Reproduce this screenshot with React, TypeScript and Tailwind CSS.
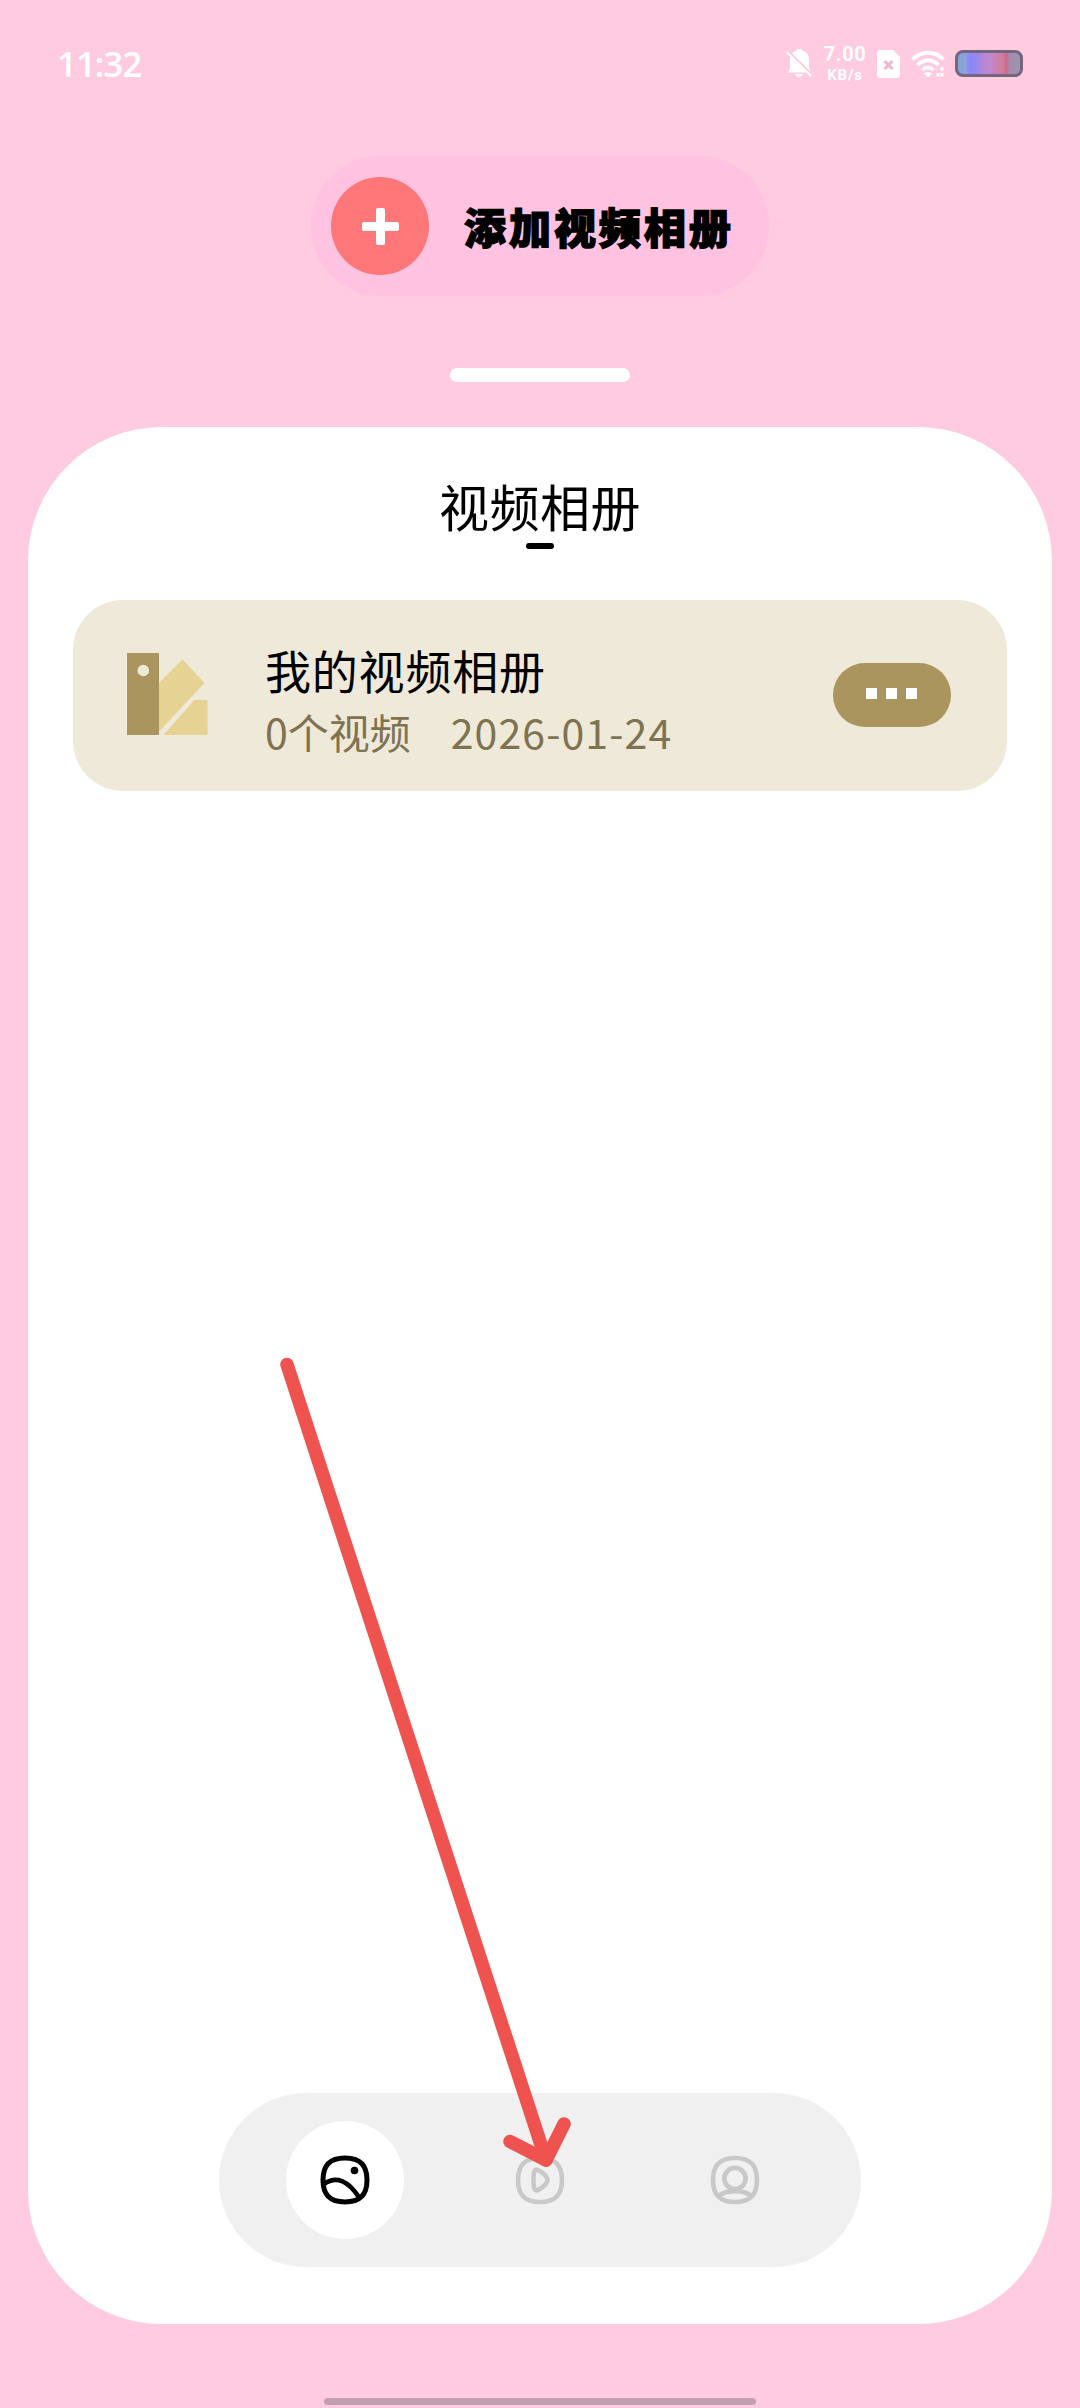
import React, { useState } from "react";

const albums = [{ id: 1, name: "我的视频相册", count: 0, date: "2026-01-24" }];

const SQUIRCLE =
  "M25 3C40 3 47 10 47 25C47 40 40 47 25 47C10 47 3 40 3 25C3 10 10 3 25 3Z";

const GalleryIcon = () => (
  <svg width="50" height="50" viewBox="0 0 50 50" fill="none">
    <path d={SQUIRCLE} stroke="currentColor" strokeWidth="5" />
    <path
      d="M4 29C16 20.5 28 25 39.5 43"
      stroke="currentColor"
      strokeWidth="4.6"
    />
    <circle cx="34.5" cy="15.5" r="3.8" fill="currentColor" />
  </svg>
);

const PlayIcon = () => (
  <svg width="50" height="50" viewBox="0 0 50 50" fill="none">
    <path d={SQUIRCLE} stroke="currentColor" strokeWidth="4.6" />
    <path
      d="M18.5 25C18.5 17 19.5 13.5 23 15C26 16.5 32.5 21 32.5 25C32.5 29 26 33.5 23 35C19.5 36.5 18.5 33 18.5 25Z"
      stroke="currentColor"
      strokeWidth="4.6"
    />
  </svg>
);

const ProfileIcon = () => (
  <svg width="50" height="50" viewBox="0 0 50 50" fill="none">
    <path d={SQUIRCLE} stroke="currentColor" strokeWidth="4.6" />
    <circle cx="25" cy="23.5" r="10.6" stroke="currentColor" strokeWidth="4.6" />
    <path
      d="M8.5 41C17 34.5 33 34.5 41.5 41"
      stroke="currentColor"
      strokeWidth="4.6"
    />
  </svg>
);

const tabs = [
  { id: "albums", label: "相册", icon: GalleryIcon },
  { id: "play", label: "播放", icon: PlayIcon },
  { id: "profile", label: "我的", icon: ProfileIcon },
];

const StatusBar = () => (
  <header className="flex h-[84px] items-center pl-[57px] pr-[57px] pt-[43px] text-white">
    <span className="font-['Open_Sans',sans-serif] text-[35px] font-semibold leading-10 tracking-[-1.1px]">
      11:32
    </span>
    <div className="ml-auto flex h-10 items-center">
      <svg width="26" height="30" viewBox="0 0 26 30">
        <path
          d="M11 1.5a2.5 2.5 0 0 1 5 0c4.500 1 7 4.500 7 9v8l2 5H2l2-5v-8c0-4.500 2.500-8 7-9ZM9 25h8c-1 4-7 4-8 0Z"
          fill="#fff"
        />
        <path d="M2 2L26 25.5" stroke="#ffcbe1" strokeWidth="2" />
        <path d="M0.5 3L25 27" stroke="#fff" strokeWidth="1.8" />
      </svg>
      <div className="ml-[11px] flex w-[44px] flex-col items-center font-['Roboto',sans-serif] font-bold">
        <span className="text-[20px] leading-[23px] tracking-[0.6px]">7.00</span>
        <span className="text-[15px] leading-[18px] tracking-[0.8px]">KB/s</span>
      </div>
      <svg className="ml-[10px]" width="24" height="28" viewBox="0 0 24 28">
        <path
          d="M3 0h13l7 7v18a3 3 0 0 1-3 3H3a3 3 0 0 1-3-3V3a3 3 0 0 1 3-3Z"
          fill="#fff"
        />
        <path d="M7.5 11l8 8M15.5 11l-8 8" stroke="#efb6d0" strokeWidth="3" />
      </svg>
      <svg className="ml-[10px]" width="34" height="28" viewBox="0 0 34 28" fill="none">
        <path d="M1.5 9.5C10 0.5 24 0.5 32.5 9.5" stroke="#fff" strokeWidth="4" />
        <path d="M6.5 15C12.5 8.5 21.5 8.5 27.5 15" stroke="#fff" strokeWidth="4" />
        <path d="M11.5 20C15 16.5 19 16.5 22.5 20" stroke="#fff" strokeWidth="3.5" />
        <path d="M13 23.5Q17 20.5 21 23.5L17 27.5Z" fill="#fff" />
        <path d="M31 17v3.5M31 23v3.5M27 23v3.5" stroke="#fff" strokeWidth="3" />
      </svg>
      <div className="ml-[10px] h-[27px] w-[68px] rounded-[8px] border-[3px] border-[#75667f] bg-[linear-gradient(90deg,#84a2cf_0%,#8ba1dc_12%,#8988fa_20%,#9a88ec_32%,#b985d4_42%,#bf88cf_52%,#d07fab_66%,#d27698_74%,#c9678a_78%,#a38bab_83%,#9a95b3_100%)]" />
    </div>
  </header>
);

const SwatchIcon = () => (
  <svg className="mb-[4px]" width="82" height="82" viewBox="0 0 82 82">
    <path
      d="M0 0H32V82H0ZM16.3 11.7a5.8 5.8 0 1 0 0.01 11.6a5.8 5.8 0 1 0 0-11.6Z"
      fill="#a9955d"
      fillRule="evenodd"
    />
    <path d="M32 30L55.5 6.5L77.5 30L32 78.500Z" fill="#e6d293" />
    <path d="M67.500 47H80.500V82H36.500Z" fill="#e6d293" />
  </svg>
);

// Hand-drawn style pointer over the play tab
const GuideArrow = () => (
  <svg
    className="pointer-events-none absolute left-[270px] top-[1350px]"
    width="320"
    height="830"
    viewBox="270 1350 320 830"
    fill="none"
    stroke="#ef534f"
    strokeWidth="13.5"
    strokeLinecap="round"
    strokeLinejoin="round"
  >
    <path d="M287 1364.5L546 2160" />
    <path d="M510 2141.5L546 2160L564 2124" />
  </svg>
);

export default function App() {
  const [activeTab, setActiveTab] = useState("albums");

  return (
    <div className="relative flex h-[2408px] w-[1080px] flex-col overflow-hidden bg-[#ffcbe1] font-['Noto_Sans_CJK_SC',sans-serif]">
      <StatusBar />

      <button className="mx-auto mt-[72px] flex h-[140px] w-[458px] items-center rounded-full bg-[#ffc2e0] pl-5">
        <span className="flex size-[98px] items-center justify-center rounded-full bg-[#fd7778]">
          <svg width="37" height="37" viewBox="0 0 37 37">
            <rect x="14" width="9" height="37" rx="2" fill="#fff" />
            <rect y="14" width="37" height="9" rx="2" fill="#fff" />
          </svg>
        </span>
        <span className="ml-[35px] whitespace-nowrap text-[42px] font-black leading-[60px] tracking-[3px] text-black [-webkit-text-stroke:1.4px_#000]">
          添加视频相册
        </span>
      </button>

      <div className="mx-auto mt-[72px] h-[14px] w-[180px] rounded-full bg-white" />

      <main className="mx-[28px] mt-[45px] flex h-[1897px] flex-col items-center rounded-[134px] bg-white">
        <h1 className="mt-[43px] text-[50px] leading-[70px] tracking-[0.5px] text-black">
          视频相册
        </h1>
        <div className="mt-[3px] h-[6px] w-[28px] rounded-[3px] bg-black" />

        <div className="mt-[51px] w-[934px]">
          {albums.map(album => (
            <div
              key={album.id}
              className="flex h-[191px] items-center rounded-[50px] bg-[#efe9d9] pl-[54px] pr-[56px]"
            >
              <SwatchIcon />
              <div className="ml-[56px] mt-[9px] flex flex-col">
                <p className="text-[46px] leading-[62px] tracking-[0.8px] text-black">
                  {album.name}
                </p>
                <p className="flex gap-[40px] whitespace-nowrap text-[41px] leading-[62px] text-[#7e7350]">
                  <span>{album.count}个视频</span>
                  <span className="tracking-[1.1px]">{album.date}</span>
                </p>
              </div>
              <button
                aria-label="更多"
                className="mb-[2px] ml-auto flex h-16 w-[118px] items-center justify-center gap-[9px] rounded-full bg-[#a9955d] pb-[2px] pr-[2px]"
              >
                <i className="size-[11px] bg-white" />
                <i className="size-[11px] bg-white" />
                <i className="size-[11px] bg-white" />
              </button>
            </div>
          ))}
        </div>

        <nav className="mb-[57px] mt-auto flex h-[174px] w-[642px] items-center justify-center gap-[77px] rounded-full bg-[#f0f0f0]">
          {tabs.map(({ id, label, icon: Icon }) => (
            <button
              key={id}
              aria-label={label}
              onClick={() => setActiveTab(id)}
              className={`flex size-[118px] items-center justify-center rounded-full ${
                id === activeTab ? "bg-white text-black" : "text-[#c8c8c8]"
              }`}
            >
              <Icon />
            </button>
          ))}
        </nav>
      </main>

      <div className="mx-auto mt-[74px] h-[7px] w-[432px] rounded-full bg-[#c3a0b1]" />

      <GuideArrow />
    </div>
  );
}
